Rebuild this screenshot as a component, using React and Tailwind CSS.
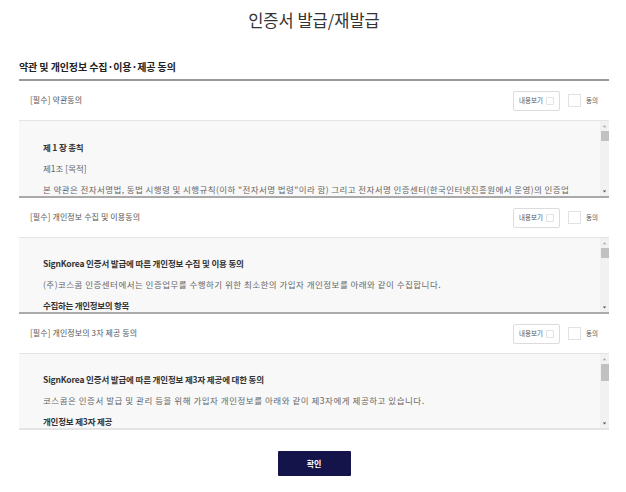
const FONT = "font-['Noto_Sans_CJK_KR','Noto_Sans',sans-serif]";

function Scrollbar({ thumb }) {
  return (
    <div className="absolute right-0 top-0 bottom-0 w-[9px] bg-[#f1f1f1] flex flex-col items-center">
      <svg width="9" height="9" viewBox="0 0 9 9" className="mt-[1px]"><path d="M4.5 3.2 L6.2 5.2 L2.8 5.2 Z" fill="#a3a3a3" /></svg>
      <div className="w-[8px] bg-[#c1c1c1]" style={{ height: thumb }} />
      <div className="flex-1" />
      <svg width="9" height="9" viewBox="0 0 9 9"><path d="M2.8 3.6 L6.2 3.6 L4.5 5.6 Z" fill="#505050" /></svg>
    </div>
  );
}

function Row({ label }) {
  return (
    <div className="h-[39px] flex items-center justify-between pl-[11px] pr-[11px]">
      <span className="text-[8px] leading-none text-[#555] tracking-[0.1px] mt-[-1px]">{label}</span>
      <div className="flex items-center">
        <div className="w-[47px] h-[20px] border border-[#dcdcdc] rounded-[2px] flex items-center justify-center gap-[3px] bg-white">
          <span className="text-[6.5px] leading-none text-[#555]">내용보기</span>
          <span className="w-[8px] h-[8px] border border-[#e2e2e2] rounded-[1px]" />
        </div>
        <span className="w-[13px] h-[13px] border border-[#e2e2e2] ml-[8px]" />
        <span className="text-[6.5px] leading-none text-[#555] ml-[5px]">동의</span>
      </div>
    </div>
  );
}

function Panel({ thumb, bottom, height, pad, children }) {
  return (
    <div className={`relative bg-[#f8f8f8] border-t border-[#e4e4e4] border-b-2 overflow-hidden ${bottom} ${height}`}>
      <div className={`pl-[24px] pr-[16px] text-[8.5px] leading-[21px] text-[#666] whitespace-nowrap overflow-hidden h-full ${pad}`}>
        {children}
      </div>
      <Scrollbar thumb={thumb} />
    </div>
  );
}

export default function App() {
  return (
    <div className={`w-[626px] h-[492px] bg-white overflow-hidden ${FONT}`}>
      <h1 className="pt-[8px] pl-[2px] h-[56px] text-center text-[16.5px] leading-[24px] font-normal text-[#333]">인증서 발급/재발급</h1>
      <div className="mx-[19px] w-[590px]">
        <h2 className="h-[23px] text-[10px] leading-[21px] font-bold text-[#222] tracking-[-0.1px]">약관 및 개인정보 수집·이용·제공 동의</h2>
        <div className="border-t-2 border-[#999]">
          <Row label="[필수] 약관동의" />
          <Panel thumb={10} bottom="border-b-[#aaa]" height="h-[78px]" pad="pt-[16px]">
            <p className="font-bold text-[#333] tracking-[-0.2px]">제 1 장 총칙</p>
            <p>제1조 [목적]</p>
            <p className="tracking-[0.41px]">본 약관은 전자서명법, 동법 시행령 및 시행규칙(이하 "전자서명 법령"이라 함) 그리고 전자서명 인증센터(한국인터넷진흥원에서 운영)의 인증업</p>
          </Panel>
          <Row label="[필수] 개인정보 수집 및 이용동의" />
          <Panel thumb={10} bottom="border-b-[#aaa]" height="h-[77px]" pad="pt-[15px]">
            <p className="font-bold text-[#333] tracking-[-0.17px]">SignKorea 인증서 발급에 따른 개인정보 수집 및 이용 동의</p>
            <p className="tracking-[0.47px]">(주)코스콤 인증센터에서는 인증업무를 수행하기 위한 최소한의 가입자 개인정보를 아래와 같이 수집합니다.</p>
            <p className="font-bold text-[#333] tracking-[-0.3px]">수집하는 개인정보의 항목</p>
          </Panel>
          <Row label="[필수] 개인정보의 3자 제공 동의" />
          <Panel thumb={17} bottom="border-b-[#e4e4e4]" height="h-[77px]" pad="pt-[15px]">
            <p className="font-bold text-[#333] tracking-[-0.17px]">SignKorea 인증서 발급에 따른 개인정보 제3자 제공에 대한 동의</p>
            <p className="tracking-[0.52px]">코스콤은 인증서 발급 및 관리 등을 위해 가입자 개인정보를 아래와 같이 제3자에게 제공하고 있습니다.</p>
            <p className="font-bold text-[#333] tracking-[-0.2px]">개인정보 제3자 제공</p>
          </Panel>
        </div>
        <div className="flex justify-center pt-[21px]">
          <button className="w-[73px] h-[25px] bg-[#14144a] rounded-[1px] text-white text-[8px] font-bold">확인</button>
        </div>
      </div>
    </div>
  );
}
